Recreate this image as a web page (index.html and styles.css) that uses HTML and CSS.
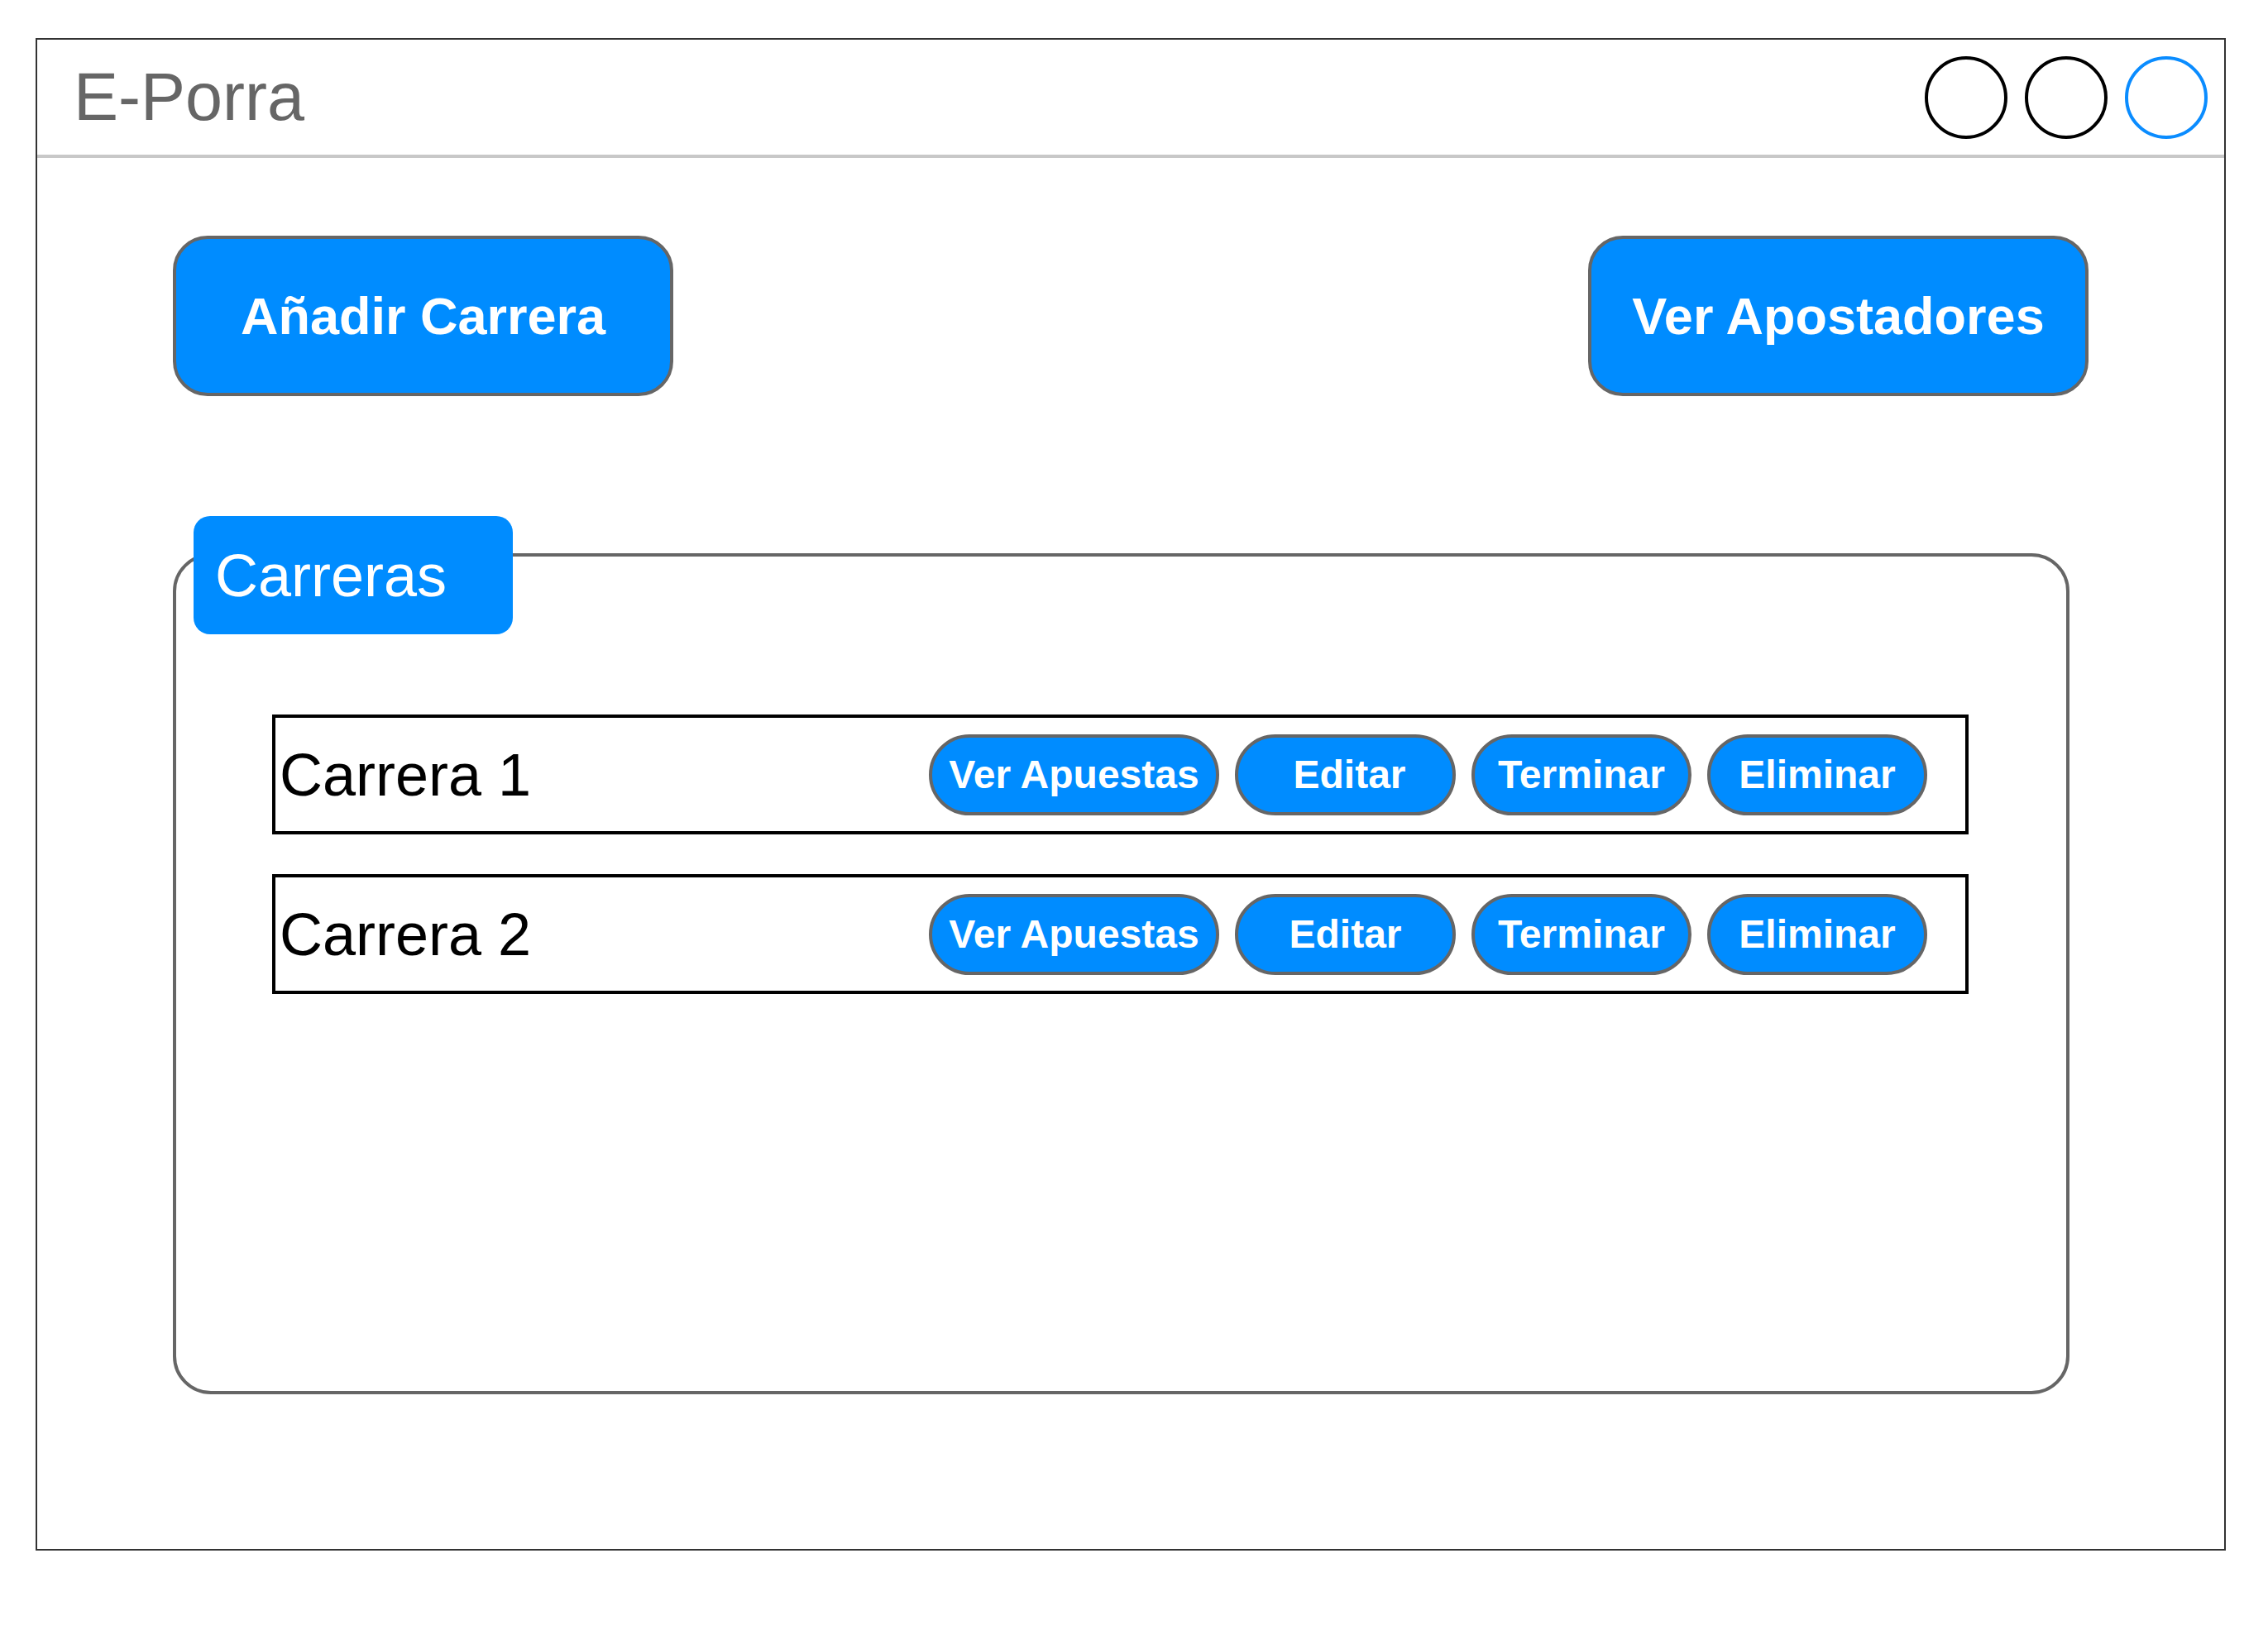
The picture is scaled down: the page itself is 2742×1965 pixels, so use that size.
FILE: index.html
```html
<!DOCTYPE html>
<html lang="es">
<head>
<meta charset="utf-8">
<title>E-Porra</title>
<link rel="stylesheet" href="styles.css">
</head>
<body>
<div class="window">
  <header class="header">
    <h1 class="title">E-Porra</h1>
    <div class="controls">
      <span class="ctrl"></span>
      <span class="ctrl"></span>
      <span class="ctrl ctrl-blue"></span>
    </div>
  </header>
  <div class="toolbar">
    <button class="big-btn">Añadir Carrera</button>
    <button class="big-btn">Ver Apostadores</button>
  </div>
  <section class="races">
    <div class="tab">Carreras</div>
    <div class="panel">
      <div class="row">
        <span class="row-name">Carrera 1</span>
        <div class="actions">
          <button class="pill pill-wide">Ver Apuestas</button>
          <button class="pill pill-edit pill-shift">Editar</button>
          <button class="pill">Terminar</button>
          <button class="pill">Eliminar</button>
        </div>
      </div>
      <div class="row">
        <span class="row-name">Carrera 2</span>
        <div class="actions">
          <button class="pill pill-wide">Ver Apuestas</button>
          <button class="pill pill-edit">Editar</button>
          <button class="pill">Terminar</button>
          <button class="pill">Eliminar</button>
        </div>
      </div>
    </div>
  </section>
</div>
</body>
</html>
```

FILE: styles.css
```css
* {
  box-sizing: border-box;
}

html, body {
  margin: 0;
  padding: 0;
  background: #ffffff;
}

body {
  font-family: "Liberation Sans", Arial, sans-serif;
  padding: 46px 0 0 43px;
}

.window {
  width: 2648px;
  height: 1829px;
  border: 2px solid #333333;
  background: #ffffff;
}

.header {
  height: 143px;
  border-bottom: 4px solid #c8c8c8;
  display: flex;
  align-items: center;
  justify-content: space-between;
  padding: 0 20px 0 44px;
}

.title {
  margin: 0;
  font-size: 81px;
  line-height: 1;
  font-weight: normal;
  color: #666666;
}

.controls {
  display: flex;
  gap: 21px;
}

.ctrl {
  width: 100px;
  height: 100px;
  border-radius: 50%;
  border: 4px solid #000000;
}

.ctrl-blue {
  border-color: #0a8cff;
}

.toolbar {
  margin-top: 94px;
  padding: 0 164px;
  display: flex;
  justify-content: space-between;
}

.big-btn {
  width: 605px;
  height: 194px;
  border: 4px solid #666666;
  border-radius: 42px;
  background: #008cff;
  color: #ffffff;
  font-family: "Liberation Sans", Arial, sans-serif;
  font-weight: bold;
  font-size: 63px;
  padding: 0;
  line-height: 1;
}

.races {
  position: relative;
  margin: 145px 187px 0 164px;
  padding-top: 45px;
}

.tab {
  position: absolute;
  left: 25px;
  top: 0;
  width: 386px;
  height: 143px;
  border-radius: 20px;
  background: #008cff;
  color: #ffffff;
  font-size: 72px;
  line-height: 1;
  display: flex;
  align-items: center;
  padding-left: 26px;
}

.panel {
  height: 1017px;
  border: 4px solid #666666;
  border-radius: 46px;
  padding: 191px 118px 0 116px;
  display: flex;
  flex-direction: column;
  gap: 48px;
}

.row {
  height: 145px;
  border: 4px solid #000000;
  display: flex;
  align-items: center;
  justify-content: space-between;
  padding: 0 46px 0 5px;
}

.row-name {
  font-size: 72px;
  line-height: 1;
  color: #000000;
}

.actions {
  display: flex;
  gap: 19px;
}

.pill {
  width: 266px;
  height: 98px;
  border: 4px solid #666666;
  border-radius: 49px;
  background: #008cff;
  color: #ffffff;
  font-family: "Liberation Sans", Arial, sans-serif;
  font-weight: bold;
  font-size: 48px;
  line-height: 1;
  padding: 0;
}

.pill-wide {
  width: 351px;
}

.pill-edit {
  width: 267px;
}

.pill-shift {
  padding-left: 10px;
}
```
